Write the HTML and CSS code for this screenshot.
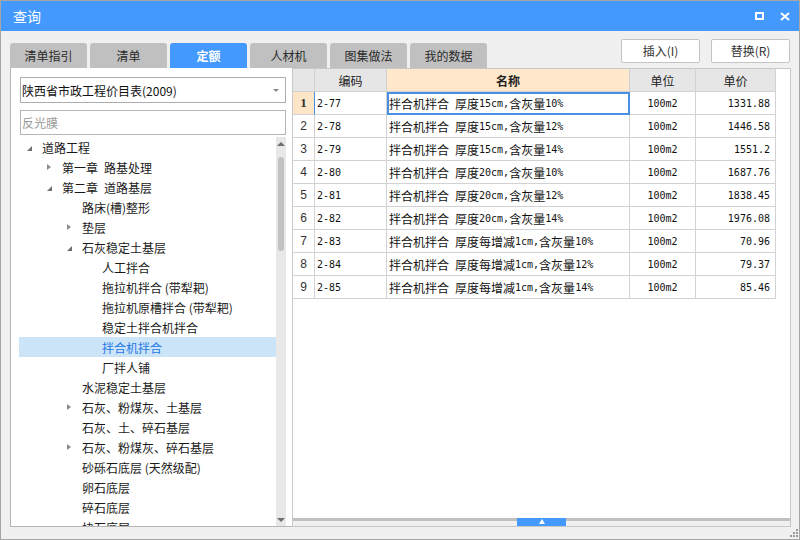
FILE: index.html
```html
<!DOCTYPE html>
<html lang="zh-CN">
<head>
<meta charset="utf-8">
<title>查询</title>
<link rel="stylesheet" href="styles.css">
</head>
<body>
<div class="win">
  <div class="titlebar">
    <div class="title">查询</div>
    <div class="tb-btns">
      <svg width="9" height="8" viewBox="0 0 9 8"><rect x="1" y="1" width="7" height="6" fill="none" stroke="#fff" stroke-width="2"/></svg>
      <svg width="10" height="9" viewBox="0 0 10 9"><path d="M1 1L9 8M9 1L1 8" stroke="#fff" stroke-width="2" fill="none"/></svg>
    </div>
  </div>
  <div class="body">
    <div class="toprow">
      <div class="tabs">
        <div class="tab">清单指引</div>
        <div class="tab">清单</div>
        <div class="tab active">定额</div>
        <div class="tab">人材机</div>
        <div class="tab">图集做法</div>
        <div class="tab">我的数据</div>
      </div>
      <div class="actions">
        <div class="btn">插入(I)</div>
        <div class="btn">替换(R)</div>
      </div>
    </div>
    <div class="main">
      <div class="left">
        <div class="combo"><span class="combo-text">陕西省市政工程价目表(2009)</span><span class="caret"></span></div>
        <div class="search">反光膜</div>
        <div class="tree">
          <div class="list">
            <div class="row l0"><span class="tw"><span class="exp"></span></span>道路工程</div>
            <div class="row l1"><span class="tw"><span class="col"></span></span>第一章&ensp;路基处理</div>
            <div class="row l1"><span class="tw"><span class="exp"></span></span>第二章&ensp;道路基层</div>
            <div class="row l2"><span class="tw"></span>路床(槽)整形</div>
            <div class="row l2"><span class="tw"><span class="col"></span></span>垫层</div>
            <div class="row l2"><span class="tw"><span class="exp"></span></span>石灰稳定土基层</div>
            <div class="row l3"><span class="tw"></span>人工拌合</div>
            <div class="row l3"><span class="tw"></span>拖拉机拌合 (带犁耙)</div>
            <div class="row l3"><span class="tw"></span>拖拉机原槽拌合 (带犁耙)</div>
            <div class="row l3"><span class="tw"></span>稳定土拌合机拌合</div>
            <div class="row l3 sel"><span class="tw"></span>拌合机拌合</div>
            <div class="row l3"><span class="tw"></span>厂拌人铺</div>
            <div class="row l2"><span class="tw"></span>水泥稳定土基层</div>
            <div class="row l2"><span class="tw"><span class="col"></span></span>石灰、粉煤灰、土基层</div>
            <div class="row l2"><span class="tw"></span>石灰、土、碎石基层</div>
            <div class="row l2"><span class="tw"><span class="col"></span></span>石灰、粉煤灰、碎石基层</div>
            <div class="row l2"><span class="tw"></span>砂砾石底层 (天然级配)</div>
            <div class="row l2"><span class="tw"></span>卵石底层</div>
            <div class="row l2"><span class="tw"></span>碎石底层</div>
            <div class="row l2"><span class="tw"></span>块石底层</div>
          </div>
          <div class="sb">
            <span class="sb-up"></span>
            <span class="sb-thumb"></span>
            <span class="sb-fill"></span>
            <span class="sb-down"></span>
          </div>
        </div>
      </div>
      <div class="right">
        <div class="gridwrap">
          <div class="grid">
            <div class="c hd"></div><div class="c hd">编码</div><div class="c hd name-hd">名称</div><div class="c hd">单位</div><div class="c hd">单价</div>

            <div class="c rn cur">1</div><div class="c code">2-77</div><div class="c name selc">拌合机拌合&ensp;厚度<span class="m">15cm,</span>含灰量<span class="m">10%</span></div><div class="c unit">100m2</div><div class="c price">1331.88</div>
            <div class="c rn">2</div><div class="c code">2-78</div><div class="c name">拌合机拌合&ensp;厚度<span class="m">15cm,</span>含灰量<span class="m">12%</span></div><div class="c unit">100m2</div><div class="c price">1446.58</div>
            <div class="c rn">3</div><div class="c code">2-79</div><div class="c name">拌合机拌合&ensp;厚度<span class="m">15cm,</span>含灰量<span class="m">14%</span></div><div class="c unit">100m2</div><div class="c price">1551.2</div>
            <div class="c rn">4</div><div class="c code">2-80</div><div class="c name">拌合机拌合&ensp;厚度<span class="m">20cm,</span>含灰量<span class="m">10%</span></div><div class="c unit">100m2</div><div class="c price">1687.76</div>
            <div class="c rn">5</div><div class="c code">2-81</div><div class="c name">拌合机拌合&ensp;厚度<span class="m">20cm,</span>含灰量<span class="m">12%</span></div><div class="c unit">100m2</div><div class="c price">1838.45</div>
            <div class="c rn">6</div><div class="c code">2-82</div><div class="c name">拌合机拌合&ensp;厚度<span class="m">20cm,</span>含灰量<span class="m">14%</span></div><div class="c unit">100m2</div><div class="c price">1976.08</div>
            <div class="c rn">7</div><div class="c code">2-83</div><div class="c name">拌合机拌合&ensp;厚度每增减<span class="m">1cm,</span>含灰量<span class="m">10%</span></div><div class="c unit">100m2</div><div class="c price">70.96</div>
            <div class="c rn">8</div><div class="c code">2-84</div><div class="c name">拌合机拌合&ensp;厚度每增减<span class="m">1cm,</span>含灰量<span class="m">12%</span></div><div class="c unit">100m2</div><div class="c price">79.37</div>
            <div class="c rn">9</div><div class="c code">2-85</div><div class="c name">拌合机拌合&ensp;厚度每增减<span class="m">1cm,</span>含灰量<span class="m">14%</span></div><div class="c unit">100m2</div><div class="c price">85.46</div>
          </div>
        </div>
        <div class="split"><div class="handle"><span class="up"></span></div></div>
      </div>
    </div>
    <div class="foot">
      <svg class="grip" width="8" height="8" viewBox="0 0 8 8"><g fill="#9c9c9c"><rect x="6" y="0" width="2" height="2"/><rect x="3" y="3" width="2" height="2"/><rect x="6" y="3" width="2" height="2"/><rect x="0" y="6" width="2" height="2"/><rect x="3" y="6" width="2" height="2"/><rect x="6" y="6" width="2" height="2"/></g></svg>
    </div>
  </div>
</div>
</body>
</html>
```

FILE: styles.css
```css
* { box-sizing: border-box; margin: 0; padding: 0; }
body {
  width: 800px; height: 540px; overflow: hidden;
  font-family: "Noto Sans CJK SC", "Noto Sans", sans-serif;
  font-size: 12px; color: #222;
}
.win {
  width: 800px; height: 540px;
  border: 1px solid #a6a6a6;
  background: #f0f0f0;
  display: flex; flex-direction: column;
}
.titlebar {
  height: 30px; flex: none;
  background: #4499ff; color: #fff;
  display: flex; align-items: center;
  padding: 0 9px 0 12px;
}
.title { flex: 1; font-size: 14px; }
.tb-btns { display: flex; align-items: center; gap: 16px; }
.tb-btns svg { display: block; }

.body { flex: 1; display: flex; flex-direction: column; padding: 8px 8px 0 9px; min-height: 0; }
.toprow { height: 29px; flex: none; display: flex; }
.tabs { display: flex; gap: 3px; align-self: flex-end; }
.tab {
  width: 77px; height: 25px;
  background: #c0c0c0; border-radius: 3px 3px 0 0;
  text-align: center; line-height: 25px; color: #2a2a2a;
}
.tab.active { background: #4499ff; color: #fff; font-weight: bold; }
.actions { margin-left: auto; margin-right: 1px; display: flex; gap: 11px; align-self: flex-start; }
.btn {
  width: 79px; height: 24px;
  border: 1px solid #c4c4c4; border-radius: 2px; background: #fff;
  text-align: center; line-height: 22px; color: #333;
}

.main { height: 459px; flex: none; display: flex; }
.left {
  width: 282px; flex: none;
  background: #fff;
  border-left: 1px solid #b5b5b5; border-bottom: 1px solid #b5b5b5;
  display: flex; flex-direction: column;
  padding: 9px 6px 0 8px;
}
.combo {
  margin-left: 1px; width: 266px; height: 26px; flex: none;
  border: 1px solid #adadad;
  display: flex; align-items: center; padding-left: 1px; color: #111;
}
.combo-text { flex: 1; }
.caret {
  width: 0; height: 0; margin-right: 6px;
  border-left: 3px solid transparent; border-right: 3px solid transparent;
  border-top: 3px solid #8a8a8a;
}
.search {
  margin: 7px 0 0 1px; width: 266px; height: 25px; flex: none;
  border: 1px solid #b5b5b5;
  display: flex; align-items: center; padding-left: 1px; color: #9a9a9a;
}
.tree { margin-top: 2px; flex: 1; min-height: 0; display: flex; overflow: hidden; }
.list { width: 257px; flex: none; overflow: hidden; }
.row { height: 20px; display: flex; align-items: center; white-space: nowrap; color: #1a1a1a; }
.row.l0 { padding-left: 6px; }
.row.l1 { padding-left: 26px; }
.row.l2 { padding-left: 46px; }
.row.l3 { padding-left: 66px; }
.row.sel { background: #cce4f7; color: #1e78e6; }
.tw { width: 17px; height: 20px; flex: none; display: flex; align-items: center; padding-left: 2px; }
.exp {
  width: 0; height: 0; margin-top: 3px;
  border-left: 5px solid transparent; border-bottom: 5px solid #6f6f6f;
}
.col {
  width: 0; height: 0;
  border-top: 3.5px solid transparent; border-bottom: 3.5px solid transparent;
  border-left: 4px solid #8c8c8c;
}
.sb { width: 10px; flex: none; background: #e8e8e8; display: flex; flex-direction: column; align-items: center; }
.sb-up {
  margin-top: 5px; width: 0; height: 0;
  border-left: 4px solid transparent; border-right: 4px solid transparent;
  border-bottom: 4px solid #6e6e6e;
}
.sb-thumb { margin-top: 11px; width: 6px; height: 94px; border-radius: 3px; background: #c2c2c2; }
.sb-fill { flex: 1; }
.sb-down {
  margin-bottom: 4px; width: 0; height: 0;
  border-left: 4px solid transparent; border-right: 4px solid transparent;
  border-top: 4px solid #6e6e6e;
}

.right {
  flex: 1; min-width: 0;
  border: 1px solid #c8c8c8; background: #fff;
  display: flex; flex-direction: column;
}
.gridwrap { flex: 1; min-height: 0; overflow: hidden; }
.grid { display: grid; grid-template-columns: 22px 72px 243px 66px 80px; grid-auto-rows: 23px; }
.c {
  border-right: 1px solid #d2d2d2; border-bottom: 1px solid #d2d2d2;
  display: flex; align-items: center; white-space: nowrap; overflow: hidden;
  color: #111;
}
.hd { background: #e6e6e6; justify-content: center; color: #222; }
.name-hd { background: #fee7ca; font-weight: bold; }
.rn { justify-content: center; font-family: "Liberation Sans", sans-serif; font-size: 12px; color: #333; }
.rn.cur { background: #fde6c8; font-family: "Liberation Serif", serif; font-weight: bold; font-size: 13px; border-right-color: #4a90e2; }
.code { padding-left: 2px; font-family: "DejaVu Sans Mono", monospace; font-size: 10px; }
.name { padding-left: 2px; }
.selc { outline: 2px solid #4a90e2; outline-offset: -2px; }
.m { font-family: "DejaVu Sans Mono", monospace; font-size: 10px; }
.unit { justify-content: center; font-family: "DejaVu Sans Mono", monospace; font-size: 10px; }
.price { justify-content: flex-end; padding-right: 5px; font-family: "DejaVu Sans Mono", monospace; font-size: 10px; }

.split {
  height: 8px; flex: none;
  background: linear-gradient(#c0c0c0 0 3px, #f0f0f0 3px);
  display: flex; justify-content: center;
}
.handle { width: 49px; background: #4499ff; display: flex; justify-content: center; padding-top: 1px; }
.up {
  width: 0; height: 0;
  border-left: 3px solid transparent; border-right: 3px solid transparent;
  border-bottom: 5px solid #fff;
}
.foot { flex: 1; display: flex; justify-content: flex-end; align-items: flex-end; }
.grip { display: block; margin-right: -7px; margin-bottom: 2px; }
```
